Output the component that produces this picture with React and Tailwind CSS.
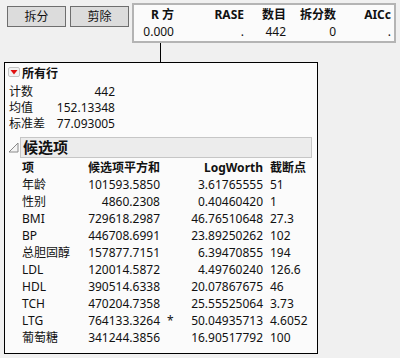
import React from "react";

const rows = [
  ["年龄", "101593.5850", "", "3.61765555", "51"],
  ["性别", "4860.2308", "", "0.40460420", "1"],
  ["BMI", "729618.2987", "", "46.76510648", "27.3"],
  ["BP", "446708.6991", "", "23.89250262", "102"],
  ["总胆固醇", "157877.7151", "", "6.39470855", "194"],
  ["LDL", "120014.5872", "", "4.49760240", "126.6"],
  ["HDL", "390514.6338", "", "20.07867675", "46"],
  ["TCH", "470204.7358", "", "25.55525064", "3.73"],
  ["LTG", "764133.3264", "*", "50.04935713", "4.6052"],
  ["葡萄糖", "341244.3856", "", "16.90517792", "100"],
];

function RedToggle() {
  return (
    <svg width="12" height="10" viewBox="0 0 12 10" className="shrink-0">
      <rect x="0.5" y="0.5" width="11" height="9" rx="1.5" fill="#f2f2f2" stroke="#c4c4c4" />
      <polygon points="2.5,3 9.5,3 6,7.5" fill="#e01010" />
    </svg>
  );
}

function GreyToggle() {
  return (
    <svg width="11" height="11" viewBox="0 0 11 11" className="shrink-0">
      <polygon points="10,1 10,10 1,10" fill="#f4f4f4" stroke="#8a8a8a" strokeWidth="1" strokeLinejoin="round" />
    </svg>
  );
}

export default function App() {
  return (
    <div className="w-[400px] h-[358px] bg-[#f0f0f0] text-[12px] text-[#111] font-['Noto_Sans','Noto_Sans_CJK_SC',sans-serif] overflow-hidden">
      {/* top row */}
      <div className="flex items-start pt-[3px]">
        <div className="flex gap-[4px] ml-[7px] mt-[3px]">
          <div className="w-[59px] h-[21px] border border-[#6e6e6e] bg-[#dcdcdc] flex items-center justify-center leading-none">拆分</div>
          <div className="w-[59px] h-[21px] border border-[#6e6e6e] bg-[#dcdcdc] flex items-center justify-center leading-none">剪除</div>
        </div>
        <div className="ml-[3px] w-[264px] h-[40px] border-2 border-[#b4b4b4] bg-[#fbfbfb] pt-[1px]">
          <div className="flex h-[17px] items-center font-bold leading-none">
            <div className="w-[40px] text-right">R 方</div>
            <div className="w-[70px] text-right">RASE</div>
            <div className="w-[42px] text-right">数目</div>
            <div className="w-[50px] text-right">拆分数</div>
            <div className="w-[55px] text-right">AICc</div>
          </div>
          <div className="flex h-[17px] items-center leading-none">
            <div className="w-[40px] text-right">0.000</div>
            <div className="w-[70px] text-right">.</div>
            <div className="w-[42px] text-right">442</div>
            <div className="w-[50px] text-right">0</div>
            <div className="w-[55px] text-right">.</div>
          </div>
        </div>
      </div>
      {/* connector */}
      <div className="ml-[160px] w-px h-[19px] bg-black" />
      {/* main box */}
      <div className="ml-[4px] w-[314px] h-[292px] border border-black bg-[#fbfbfb]">
        <div className="flex items-center h-[21px] pl-[3px] gap-[2px]">
          <div className="-mt-[4px]"><RedToggle /></div>
          <span className="font-bold leading-none">所有行</span>
        </div>
        <div className="pl-[4px]">
          {[["计数", "442"], ["均值", "152.13348"], ["标准差", "77.093005"]].map(([k, v]) => (
            <div key={k} className="w-[106px] h-[16px] flex items-center justify-between leading-none">
              <span>{k}</span>
              <span>{v}</span>
            </div>
          ))}
        </div>
        <div className="flex items-center mt-[5px] pl-[3px] gap-[1px]">
          <GreyToggle />
          <div className="w-[292px] h-[21px] border border-[#c6c6c6] bg-[#ececec] flex items-center pl-[2px]">
            <span className="font-bold text-[15px] leading-none">候选项</span>
          </div>
        </div>
        <div className="mt-[1px] pl-[17px]">
          <div className="grid grid-cols-[66px_72px_103px_auto] h-[17px] items-center font-bold leading-none whitespace-nowrap">
            <div>项</div>
            <div>候选项平方和</div>
            <div className="text-right">LogWorth</div>
            <div className="pl-[7px]">截断点</div>
          </div>
          {rows.map(([a, b, star, c, d]) => (
            <div key={a} className="grid grid-cols-[66px_72px_103px_auto] h-[17px] items-center leading-none whitespace-nowrap">
              <div>{a}</div>
              <div className="text-right">{b}</div>
              <div className="flex justify-between">
                <span className="pl-[7px]">{star}</span>
                <span>{c}</span>
              </div>
              <div className="pl-[7px]">{d}</div>
            </div>
          ))}
        </div>
      </div>
    </div>
  );
}
